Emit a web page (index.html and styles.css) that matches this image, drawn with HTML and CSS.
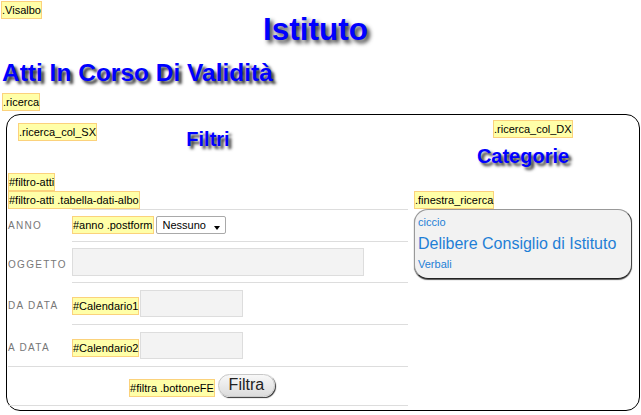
FILE: index.html
```html
<!DOCTYPE html>
<html lang="it">
<head>
<meta charset="utf-8">
<title>Istituto</title>
<link rel="stylesheet" href="styles.css">
</head>
<body>
<div class="visalbo">
  <span class="tag">.Visalbo</span>
  <h1 class="title">Istituto</h1>
  <h2 class="subtitle">Atti In Corso Di Validità</h2>
  <span class="tag tag-ricerca">.ricerca</span>
  <div class="ricerca">
    <div class="col-sx">
      <div class="col-head">
        <span class="tag tag-sx">.ricerca_col_SX</span>
        <h3 class="col-title">Filtri</h3>
      </div>
      <span class="tag">#filtro-atti</span>
      <span class="tag">#filtro-atti .tabella-dati-albo</span>
      <div class="tabella">
        <div class="lbl lbl-first">ANNO</div>
        <div class="fld fld-anno">
          <span class="tag">#anno .postform</span>
          <span class="select-wrap"><select class="postform"><option>Nessuno</option></select></span>
        </div>

        <div class="lbl">OGGETTO</div>
        <div class="fld fld-ogg">
          <input class="inp inp-ogg" type="text">
        </div>

        <div class="lbl">DA DATA</div>
        <div class="fld">
          <span class="tag tag-cal">#Calendario1</span>
          <input class="inp inp-date" type="text">
        </div>

        <div class="lbl">A DATA</div>
        <div class="fld">
          <span class="tag tag-cal">#Calendario2</span>
          <input class="inp inp-date" type="text">
        </div>

        <div class="act">
          <span class="tag">#filtra .bottoneFE</span>
          <button class="btn" type="button">Filtra</button>
        </div>
      </div>
    </div>
    <div class="col-dx">
      <span class="tag tag-dx">.ricerca_col_DX</span>
      <h3 class="col-title col-title-dx">Categorie</h3>
      <span class="tag tag-fin">.finestra_ricerca</span>
      <div class="finestra">
        <div class="cat-small">ciccio</div>
        <div class="cat-big">Delibere Consiglio di Istituto</div>
        <div class="cat-small">Verbali</div>
      </div>
    </div>
  </div>
</div>
</body>
</html>
```

FILE: styles.css
```css
* { box-sizing: border-box; }
html, body { margin: 0; }
body {
  padding: 1px;
  font-family: "Liberation Sans", Arial, sans-serif;
  background: #fff;
  color: #000;
}
.tag {
  display: block;
  width: fit-content;
  height: 18px;
  line-height: 16px;
  font-size: 11px;
  background: #ffffa8;
  border: 1px solid #fbd27c;
  color: #000;
  white-space: nowrap;
}
.title {
  margin: 0;
  padding-right: 10px;
  font-size: 31.5px;
  line-height: 20px;
  font-weight: bold;
  text-align: center;
  color: #0000ff;
  text-shadow: 3px 3px 4px #333;
}
.subtitle {
  margin: 20px 0 0 1px;
  font-size: 24.5px;
  line-height: 28px;
  font-weight: bold;
  color: #0000ff;
  text-shadow: 3px 3px 3px #333;
}
.tag-ricerca { margin: 6px 0 0 1px; }
.ricerca {
  margin: 3px 0 0 5px;
  border: 1px solid #000;
  border-radius: 14px;
  padding: 0 0 0 1px;
  display: flex;
  gap: 6px;
  align-items: flex-start;
}
.col-sx { width: 400px; padding: 8px 0 4px; }
.col-head { display: grid; margin-bottom: 19px; }
.col-head > * { grid-area: 1 / 1; }
.tag-sx { margin-left: 10px; justify-self: start; align-self: start; }
.col-title {
  margin: 1px 0 0;
  font-size: 20px;
  line-height: 30px;
  font-weight: bold;
  color: #0000ff;
  text-shadow: 3px 3px 3px #333;
  justify-self: center;
  align-self: start;
}
.tabella { display: grid; grid-template-columns: 64px 336px; }
.lbl {
  display: flex;
  align-items: center;
  font-size: 10px;
  letter-spacing: 1.3px;
  color: #777;
  padding-top: 5px;
  white-space: nowrap;
}
.lbl-first { padding-top: 0; }
.fld {
  display: flex;
  align-items: center;
  gap: 1px;
  border-top: 1px solid #ddd;
  padding: 7px 0;
}
.fld-anno { padding: 6px 0 7px; }
.fld-ogg { padding: 6px 0; }
.tag-cal { margin-top: 4px; }
.select-wrap { position: relative; display: block; margin-left: 1px; }
.select-wrap::after {
  content: "";
  position: absolute;
  left: 58px;
  top: 10px;
  border-left: 3.5px solid transparent;
  border-right: 3.5px solid transparent;
  border-top: 4px solid #000;
  pointer-events: none;
}
.postform {
  -webkit-appearance: none;
  appearance: none;
  display: block;
  width: 70px;
  height: 18px;
  margin: 0;
  padding: 0 0 0 6px;
  border: 1px solid #a9a9a9;
  border-radius: 2px;
  background: #fff;
  font-family: "Liberation Sans", Arial, sans-serif;
  font-size: 11px;
  color: #000;
}
.inp {
  display: block;
  margin: 0;
  background: #f3f3f3;
  border: 1px solid #ddd;
  padding: 0 4px;
  font-family: "Liberation Sans", Arial, sans-serif;
  font-size: 12px;
}
.inp-ogg { width: 292px; height: 28px; }
.inp-date { width: 103px; height: 27px; }
.act {
  grid-column: 1 / 3;
  display: flex;
  justify-content: center;
  align-items: flex-end;
  gap: 3px;
  border-top: 1px solid #ddd;
  border-bottom: 1px solid #ddd;
  padding: 7px 12px 8px 0;
}
.btn {
  width: 57px;
  height: 23px;
  margin: 0;
  padding: 0 0 1px;
  border: 1px solid #c8c8c8;
  border-radius: 12px;
  background: linear-gradient(#f8f8f8, #dcdcdc);
  box-shadow: 1px 1px 1px #333;
  font-family: "Liberation Sans", Arial, sans-serif;
  font-size: 16px;
  line-height: 20px;
  color: #222;
}
.col-dx { width: 218px; padding-top: 5px; }
.tag-dx { margin-left: 79px; }
.col-title-dx { margin-top: 3px; text-align: center; }
.tag-fin { margin-top: 20px; }
.finestra {
  border: 1px solid #999;
  border-right-color: #444;
  border-bottom-color: #222;
  border-radius: 14px;
  background: #f2f2f2;
  padding: 5px 3px 6px;
  box-shadow: 0 1px 1px #555;
}
.cat-small { font-size: 11px; line-height: 15px; color: #1f7fd6; }
.cat-big { font-size: 16px; line-height: 27px; color: #1f7fd6; white-space: nowrap; }
```
